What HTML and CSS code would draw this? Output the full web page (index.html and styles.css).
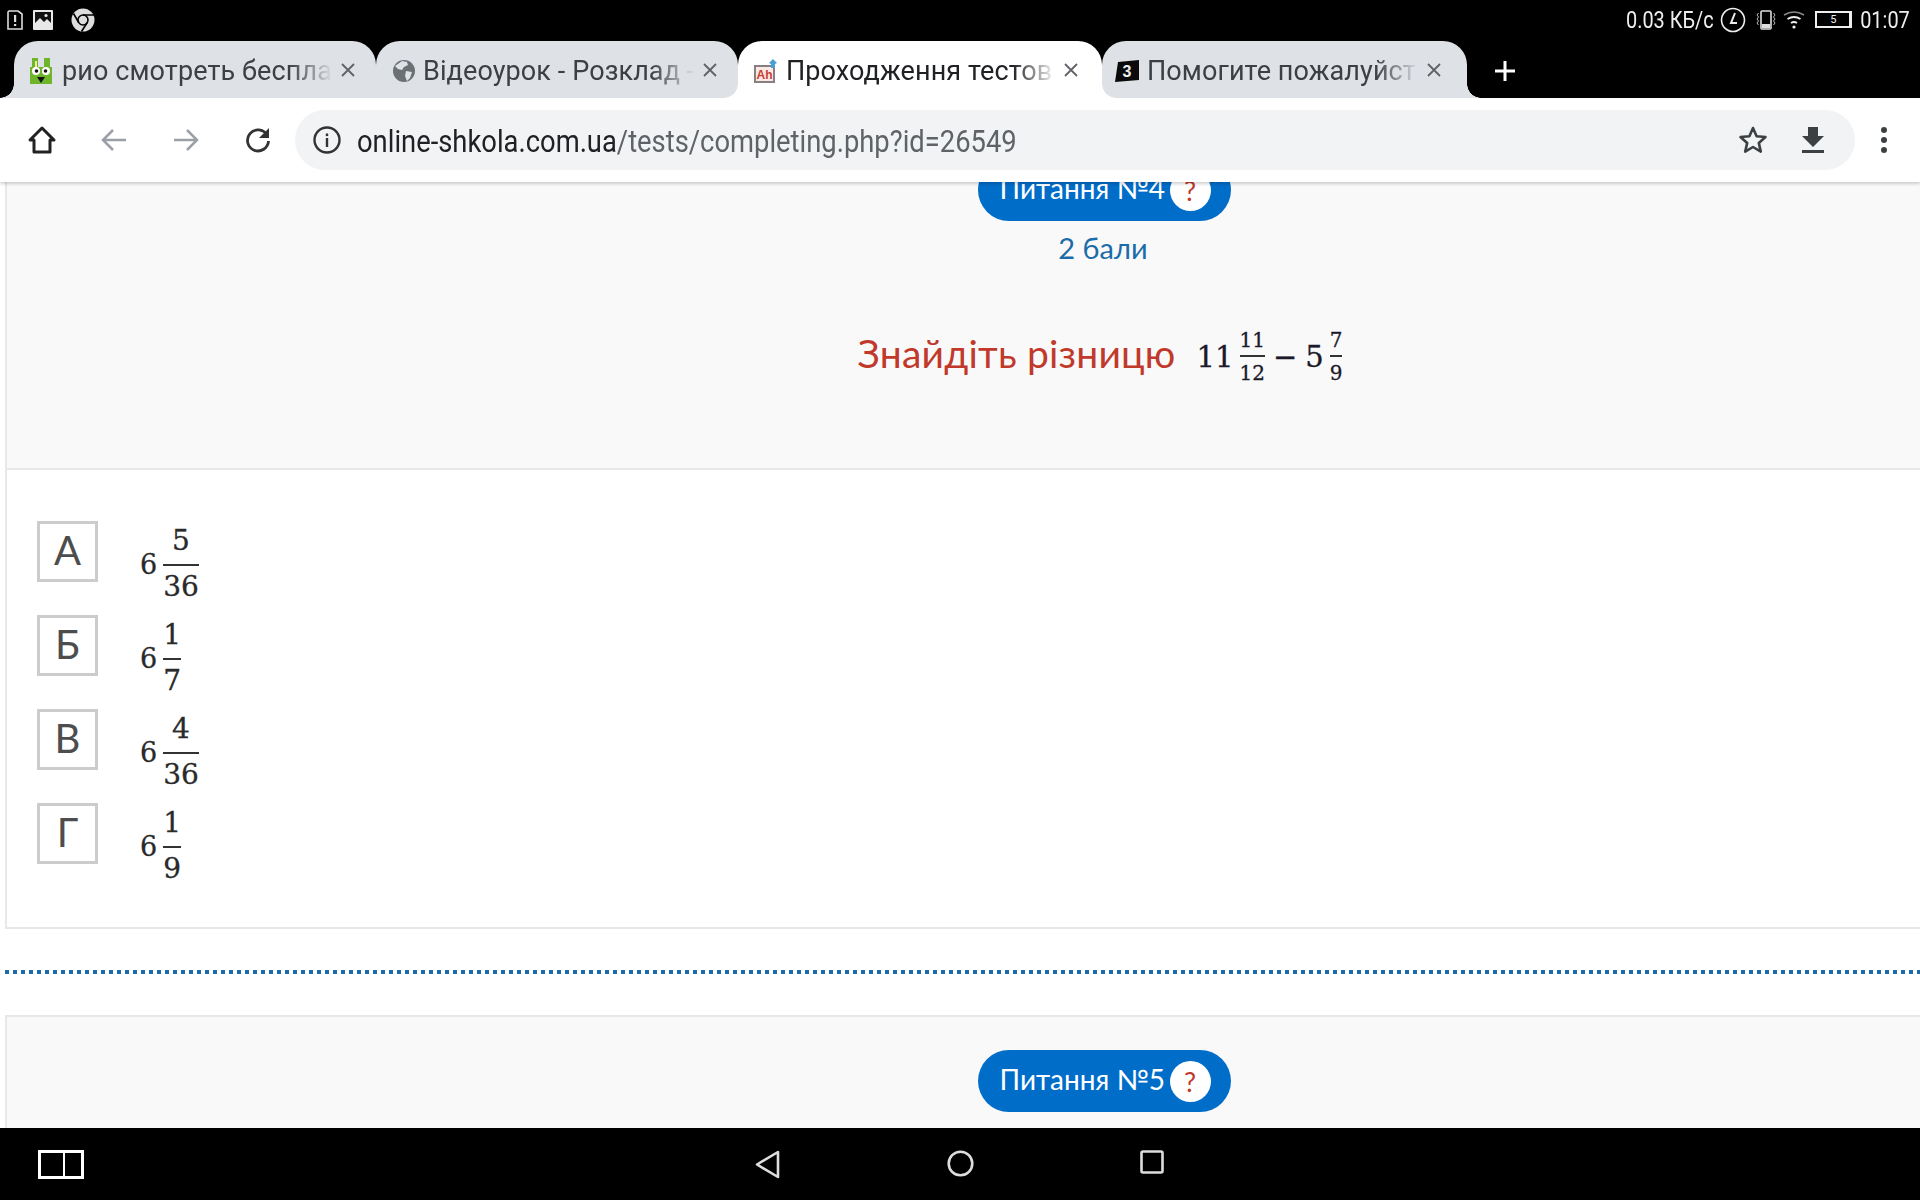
FILE: index.html
```html
<!DOCTYPE html>
<html lang="uk">
<head>
  <meta charset="UTF-8" />
  <title>Проходження тестового завдання</title>
  <meta name="viewport" content="width=device-width, initial-scale=1" />
  <link rel="stylesheet" href="styles.css">
</head>
<body>
  <div class="screen">
    <div class="status-bar">
      <div class="status-left">
        <svg class="icon-alert" width="16" height="20" viewBox="0 0 16 20"><path d="M2 1h9l4 3v15H1V2z" fill="none" stroke="#ddd" stroke-width="1.600"/><rect x="7" y="5" width="2.200" height="7" fill="#ddd"/><rect x="7" y="14" width="2.200" height="2" fill="#ddd"/></svg>
        <svg class="icon-pic" width="20" height="20" viewBox="0 0 20 20"><rect width="20" height="20" rx="1" fill="#e8e8e8"/><path d="M2 2h16v11l-4-4-3 3-4-4-5 5z" fill="#111"/><circle cx="13" cy="5.500" r="1.600" fill="#e8e8e8"/></svg>
        <svg class="icon-chrome" width="24" height="24" viewBox="0 0 24 24"><circle cx="12" cy="12" r="11.500" fill="#ddd"/><circle cx="12" cy="12" r="5" fill="none" stroke="#000" stroke-width="1.600"/><path d="M12 7h11M7.700 14.500L2.500 5.500M16.300 14.500L10.500 23.500" stroke="#000" stroke-width="1.600" fill="none"/></svg>
      </div>
      <div class="status-right">
        <span class="net-speed">0.03 КБ/с</span>
        <svg width="26" height="26" viewBox="0 0 26 26"><circle cx="13" cy="13" r="11.500" fill="none" stroke="#eee" stroke-width="1.600"/><path d="M15 6l-4 10h6" fill="none" stroke="#eee" stroke-width="2"/></svg>
        <svg class="icon-vibrate" width="20" height="22" viewBox="0 0 20 22"><rect x="5" y="2" width="10" height="18" rx="1" fill="none" stroke="#ddd" stroke-width="1.600"/><rect x="6" y="15" width="8" height="4" fill="#ddd"/><path d="M2.500 4l-1.500 2 1.500 2-1.500 2 1.500 2-1.500 2 1.500 2M17.500 4l1.500 2-1.500 2 1.500 2-1.500 2 1.500 2-1.500 2" fill="none" stroke="#bbb" stroke-width="1"/></svg>
        <svg class="icon-wifi" width="22" height="20" viewBox="0 0 22 20"><path d="M1 5q10-6 20 0" fill="none" stroke="#888" stroke-width="1.600"/><path d="M4.500 9q6.500-4 13 0" fill="none" stroke="#eee" stroke-width="1.800"/><path d="M8 13q3-2 6 0" fill="none" stroke="#eee" stroke-width="1.800"/><circle cx="11" cy="17" r="1.600" fill="#eee"/></svg>
        <div class="battery"><span class="battery-level">5</span></div>
        <span class="clock">01:07</span>
      </div>
    </div>

    <div class="tab-strip">
      <div class="tab tab-first">
        <svg class="favicon favicon-wide" width="22" height="26" viewBox="0 0 22 26"><rect y="9" width="22" height="17" fill="#6fb52c"/><rect x="2" width="6" height="12" fill="#6fb52c"/><rect x="14" width="6" height="12" fill="#6fb52c"/><rect x="5" y="3" width="2" height="8" fill="#f3e8a0"/><circle cx="6" cy="13" r="4" fill="#fff"/><circle cx="16" cy="13" r="4" fill="#fff"/><circle cx="6.500" cy="13" r="1.800" fill="#111"/><circle cx="15.500" cy="13" r="1.800" fill="#111"/><path d="M7 19h8l-4 6z" fill="#111"/></svg>
        <span class="tab-title">рио смотреть беспла</span>
        <svg class="tab-close" width="14" height="14" viewBox="0 0 14 14"><path d="M1 1l12 12M13 1L1 13" stroke="#5f6368" stroke-width="1.800"/></svg>
      </div>
      <div class="tab tab-second">
        <svg class="favicon" width="22" height="22" viewBox="0 0 22 22"><circle cx="11" cy="11" r="11" fill="#6b7075"/><path d="M9 1l5 1 1 3-4 2-2 3-4-1-3-3zM13 11l6 1-2 6-3 3-2-5z" fill="#dee1e6"/></svg>
        <span class="tab-title">Відеоурок - Розклад -</span>
        <svg class="tab-close" width="14" height="14" viewBox="0 0 14 14"><path d="M1 1l12 12M13 1L1 13" stroke="#5f6368" stroke-width="1.800"/></svg>
      </div>
      <div class="tab tab-active">
        <svg class="favicon" width="24" height="24" viewBox="0 0 24 24"><rect y="6" width="21" height="18" fill="#8a7f80"/><rect x="2" y="8" width="17" height="14" fill="#fbe9e6"/><text x="10.500" y="20" class="favicon-text">Ah</text><path d="M19 0l4 4-2 1v4h-4V5l-2-1z" fill="#4a9fd8"/></svg>
        <span class="tab-title">Проходження тестов</span>
        <svg class="tab-close" width="14" height="14" viewBox="0 0 14 14"><path d="M1 1l12 12M13 1L1 13" stroke="#5f6368" stroke-width="1.800"/></svg>
      </div>
      <div class="tab tab-last">
        <svg class="favicon" width="24" height="22" viewBox="0 0 24 22"><path d="M3 2l21-2v20L0 22z" fill="#0a0a0a"/><text x="12" y="17" class="favicon-num">3</text></svg>
        <span class="tab-title">Помогите пожалуйст</span>
        <svg class="tab-close" width="14" height="14" viewBox="0 0 14 14"><path d="M1 1l12 12M13 1L1 13" stroke="#5f6368" stroke-width="1.800"/></svg>
      </div>
      <svg class="new-tab" width="22" height="22" viewBox="0 0 22 22"><path d="M11 1v20M1 11h20" stroke="#fff" stroke-width="3"/></svg>
    </div>

    <div class="toolbar">
      <button class="tool-btn">
        <svg width="30" height="30" viewBox="0 0 30 30"><path d="M15 3L3 15h4v12h16V15h4z" fill="none" stroke="#222" stroke-width="3" stroke-linejoin="round"/></svg>
      </button>
      <button class="tool-btn">
        <svg width="30" height="30" viewBox="0 0 30 30"><path d="M27 15H5M14 5L4 15l10 10" fill="none" stroke="#9aa0a6" stroke-width="2.500"/></svg>
      </button>
      <button class="tool-btn">
        <svg width="30" height="30" viewBox="0 0 30 30"><path d="M3 15h22M16 5l10 10-10 10" fill="none" stroke="#9aa0a6" stroke-width="2.500"/></svg>
      </button>
      <button class="tool-btn">
        <svg width="30" height="30" viewBox="0 0 30 30"><path d="M24 10a10.500 10.500 0 1 0 1.500 6" fill="none" stroke="#333" stroke-width="2.800"/><path d="M26 3v10H16z" fill="#333"/></svg>
      </button>
      <div class="address-bar">
        <svg class="info-icon" width="28" height="28" viewBox="0 0 28 28"><circle cx="14" cy="14" r="12.500" fill="none" stroke="#333" stroke-width="2.400"/><rect x="12.800" y="12" width="2.400" height="9" fill="#333"/><rect x="12.800" y="7.500" width="2.400" height="2.600" fill="#333"/></svg>
        <div class="url"><span class="url-host">online-shkola.com.ua</span>/tests/completing.php?id=26549</div>
        <svg class="star" width="30" height="30" viewBox="0 0 30 30"><path d="M15 3l3.600 8.200 8.900.8-6.700 5.900 2 8.700-7.800-4.600-7.800 4.600 2-8.700L2.500 12l8.900-.8z" fill="none" stroke="#3c4043" stroke-width="2.600" stroke-linejoin="round"/></svg>
        <svg class="download" width="22" height="26" viewBox="0 0 22 26"><path d="M6 0h10v9h6L11 20 0 9h6z" fill="#3c4043"/><rect y="23" width="22" height="3" fill="#3c4043"/></svg>
      </div>
      <div class="menu-dots"><i></i><i></i><i></i></div>
    </div>

    <div class="viewport">
      <div class="page">
        <section class="card">
          <header class="card-head">
            <div class="pill"><span class="pill-label">Питання №4</span><span class="pill-help">?</span></div>
            <div class="points">2 бали</div>
            <div class="question">
              <span class="question-text">Знайдіть різницю</span>
              <span class="formula">
                <span>11</span>
                <span class="frac frac-sm"><span>11</span><span>12</span></span>
                <span class="minus">−</span>
                <span>5</span>
                <span class="frac frac-sm"><span>7</span><span>9</span></span>
              </span>
            </div>
          </header>
          <div class="options">
            <div class="option">
              <div class="option-letter">А</div>
              <div class="option-math">6<span class="frac"><span>5</span><span>36</span></span></div>
            </div>
            <div class="option">
              <div class="option-letter">Б</div>
              <div class="option-math">6<span class="frac"><span>1</span><span>7</span></span></div>
            </div>
            <div class="option">
              <div class="option-letter">В</div>
              <div class="option-math">6<span class="frac"><span>4</span><span>36</span></span></div>
            </div>
            <div class="option">
              <div class="option-letter">Г</div>
              <div class="option-math">6<span class="frac"><span>1</span><span>9</span></span></div>
            </div>
          </div>
        </section>

        <div class="separator"></div>

        <section class="card card-next">
          <header class="card-head">
            <div class="pill"><span class="pill-label">Питання №5</span><span class="pill-help">?</span></div>
          </header>
        </section>
      </div>
    </div>

    <div class="nav-bar">
      <svg class="nav-split" width="46" height="29" viewBox="0 0 46 29"><rect x="1.500" y="1.500" width="43" height="26" fill="none" stroke="#fff" stroke-width="3"/><rect x="25" y="1" width="2" height="27" fill="#fff"/></svg>
      <svg class="nav-back" width="25" height="29" viewBox="0 0 25 29"><path d="M23 2v25L2 14.500z" fill="none" stroke="#ddd" stroke-width="2.600" stroke-linejoin="round"/></svg>
      <svg class="nav-home" width="27" height="27" viewBox="0 0 27 27"><circle cx="13.500" cy="13.500" r="11.800" fill="none" stroke="#ddd" stroke-width="2.600"/></svg>
      <svg class="nav-recent" width="24" height="24" viewBox="0 0 24 24"><rect x="1.500" y="1.500" width="21" height="21" rx="1.500" fill="none" stroke="#ddd" stroke-width="2.600"/></svg>
    </div>
  </div>
</body>
</html>
```
FILE: styles.css
```css
* {
  box-sizing: border-box;
}
body {
  margin: 0;
  background: #000;
  font-family: Roboto, sans-serif;
}
.screen {
  width: 1920px;
  height: 1200px;
  display: flex;
  flex-direction: column;
  overflow: hidden;
}

/* status bar */
.status-bar {
  height: 41px;
  flex: none;
  background: #000;
  display: flex;
  justify-content: space-between;
  align-items: center;
  color: #eee;
  padding: 0 10px 2px 7px;
}
.status-left,
.status-right {
  display: flex;
  align-items: center;
}
.icon-pic {
  margin-left: 10px;
}
.icon-chrome {
  margin-left: 18px;
}
.net-speed,
.clock {
  font-size: 24px;
  display: inline-block;
  transform: scaleX(0.83);
  transform-origin: right center;
}
.net-speed {
  margin-right: 6px;
}
.clock {
  margin-left: -2px;
}
.icon-vibrate {
  margin-left: 10px;
}
.icon-wifi {
  margin-left: 7px;
}
.battery {
  width: 37px;
  height: 17px;
  margin-left: 10px;
  border: 2px solid #eee;
  border-right-width: 3px;
  text-align: center;
  font-size: 11px;
  line-height: 13px;
}

/* tabs */
.tab-strip {
  height: 57px;
  flex: none;
  display: flex;
  align-items: stretch;
  padding-left: 14px;
  background: #000;
}
.tab {
  width: 362px;
  position: relative;
  background: #dee1e6;
  border-radius: 24px 24px 0 0;
  display: flex;
  align-items: center;
  padding: 2px 21px 0 16px;
  color: #3c4043;
}
.tab-second {
  padding-left: 17px;
}
.tab-active {
  z-index: 1;
  width: 364px;
  padding-left: 16px;
  padding-right: 24px;
  background: #fff;
  color: #202124;
}
.tab-last {
  width: 365px;
  padding-left: 13px;
  padding-right: 26px;
}
/* flared bottom corners, the way chrome draws its tabs */
.tab-first::before,
.tab-active::before,
.tab-active::after,
.tab-last::after {
  content: "";
  position: absolute;
  bottom: 0;
  width: 14px;
  height: 14px;
}
.tab-first::before {
  left: -14px;
  background: radial-gradient(circle at 0 0, transparent 13.500px, #dee1e6 14px);
}
.tab-active::before {
  left: -14px;
  background: radial-gradient(circle at 0 0, transparent 13.500px, #fff 14px);
}
.tab-active::after {
  right: -14px;
  background: radial-gradient(circle at 100% 0, transparent 13.500px, #fff 14px);
}
.tab-last::after {
  right: -14px;
  background: radial-gradient(circle at 100% 0, transparent 13.500px, #dee1e6 14px);
}
.favicon {
  flex: none;
  margin-right: 8px;
}
.favicon-wide {
  margin-right: 10px;
}
.favicon-text {
  font-family: "Liberation Sans", sans-serif;
  font-size: 12px;
  font-weight: 700;
  text-anchor: middle;
  fill: #c8402f;
}
.favicon-num {
  font-family: "Liberation Sans", sans-serif;
  font-size: 16px;
  font-weight: 700;
  text-anchor: middle;
  fill: #eee;
}
.tab-title {
  flex: 1;
  min-width: 0;
  overflow: hidden;
  white-space: nowrap;
  font-size: 27px;
  letter-spacing: 0.1px;
  -webkit-mask-image: linear-gradient(to right, #000 84%, transparent 100%);
  mask-image: linear-gradient(to right, #000 84%, transparent 100%);
}
.tab-close {
  flex: none;
  margin-left: 8px;
  margin-top: -2px;
}
.new-tab {
  margin: 19px 0 0 27px;
}

/* toolbar */
.toolbar {
  height: 84px;
  flex: none;
  position: relative;
  z-index: 2;
  background: #fff;
  box-shadow: 0 2px 3px rgba(0, 0, 0, 0.18);
  display: flex;
  align-items: center;
  padding-left: 6px;
}
.tool-btn {
  width: 72px;
  height: 60px;
  padding: 0;
  border: none;
  background: none;
  display: flex;
  align-items: center;
  justify-content: center;
}
.address-bar {
  width: 1560px;
  height: 60px;
  margin-left: 1px;
  border-radius: 30px;
  background: #f1f3f4;
  display: flex;
  align-items: center;
  padding: 0 31px 0 18px;
}
.info-icon {
  flex: none;
}
.url {
  flex: 1;
  margin-left: 16px;
  padding-top: 2px;
  font-size: 31px;
  color: #5f6368;
  white-space: nowrap;
  transform: scaleX(0.883);
  transform-origin: left center;
}
.url-host {
  color: #202124;
}
.star {
  flex: none;
  margin-right: 34px;
}
.download {
  flex: none;
}
.menu-dots {
  margin-left: 26px;
  display: flex;
  flex-direction: column;
  gap: 4px;
}
.menu-dots i {
  width: 6px;
  height: 6px;
  border-radius: 50%;
  background: #3c4043;
}

/* page content */
.viewport {
  flex: 1;
  min-height: 0;
  overflow: hidden;
  background: #fff;
}
.page {
  width: 2201px;
  margin-top: -58px;
  padding-left: 5px;
  font-family: Lato, "Noto Sans", sans-serif;
}
.card {
  border: 2px solid #e8e8e8;
  background: #fff;
}
.card-next {
  background: #f9f9f9;
  min-height: 300px;
}
.card-head {
  background: #f9f9f9;
  padding-top: 33px;
  display: flex;
  flex-direction: column;
  align-items: center;
}
.card:first-child .card-head {
  height: 344px;
  border-bottom: 2px solid #e8e8e8;
}
.pill {
  height: 62px;
  width: 253px;
  margin-left: 2px;
  border-radius: 31px;
  background: #006dc9;
  color: #fff;
  font-size: 28px;
  display: flex;
  align-items: center;
  justify-content: space-between;
  padding: 0 20px 0 22px;
  white-space: nowrap;
}
.pill-label {
  padding-bottom: 4px;
}
.pill-help {
  width: 41px;
  height: 41px;
  border-radius: 50%;
  background: #fff;
  color: #c0392b;
  font-size: 27px;
  text-align: center;
  line-height: 41px;
}
.points {
  margin-top: 9px;
  font-size: 29px;
  line-height: 36px;
  color: #1b6ca8;
}
.question {
  margin-top: 52px;
  margin-right: 6px;
  display: flex;
  align-items: center;
}
.question-text {
  font-size: 39px;
  letter-spacing: 0.2px;
  color: #c0392b;
}
.formula {
  margin-left: 21px;
  padding-top: 7px;
  display: inline-flex;
  align-items: center;
  font-family: "DejaVu Serif", serif;
  font-size: 29px;
  color: #1a1a2a;
  -webkit-text-stroke: 0.3px #1a1a2a;
}
.minus {
  margin: 0 8px;
}
.frac {
  display: inline-flex;
  flex-direction: column;
  align-items: center;
  margin-left: 6px;
  font-size: 28px;
  line-height: 40px;
}
.frac > span:first-child {
  align-self: stretch;
  text-align: center;
  border-bottom: 2px solid #333;
  margin-bottom: 1px;
}
.option-math .frac > span:first-child {
  padding-bottom: 3px;
}
.frac-sm {
  font-size: 20px;
  line-height: 30px;
}
.options {
  height: 457px;
  padding: 51px 0 0 30px;
  display: flex;
  flex-direction: column;
  gap: 33px;
}
.option {
  display: flex;
  align-items: flex-start;
  height: 61px;
  gap: 42px;
}
.option-letter {
  width: 61px;
  height: 61px;
  border: 3px solid #ccc;
  display: flex;
  align-items: center;
  justify-content: center;
  padding-bottom: 4px;
  font-size: 40px;
  color: #4d4d4d;
}
.option-math {
  display: inline-flex;
  align-items: center;
  font-family: "DejaVu Serif", serif;
  font-size: 27px;
  color: #2a2a2a;
  -webkit-text-stroke: 0.3px #2a2a2a;
  white-space: nowrap;
}
.separator {
  height: 4px;
  margin: 41px 0 41px;
  background: repeating-linear-gradient(to right, #1b6ca8 0, #1b6ca8 4px, transparent 4px, transparent 8px);
}

/* bottom nav */
.nav-bar {
  height: 72px;
  flex: none;
  position: relative;
  z-index: 2;
  background: #000;
}
.nav-bar svg {
  position: absolute;
  top: 22px;
}
.nav-split {
  left: 38px;
}
.nav-back {
  left: 755px;
}
.nav-home {
  left: 947px;
  top: 23px;
}
.nav-recent {
  left: 1140px;
  top: 26px;
}
```
